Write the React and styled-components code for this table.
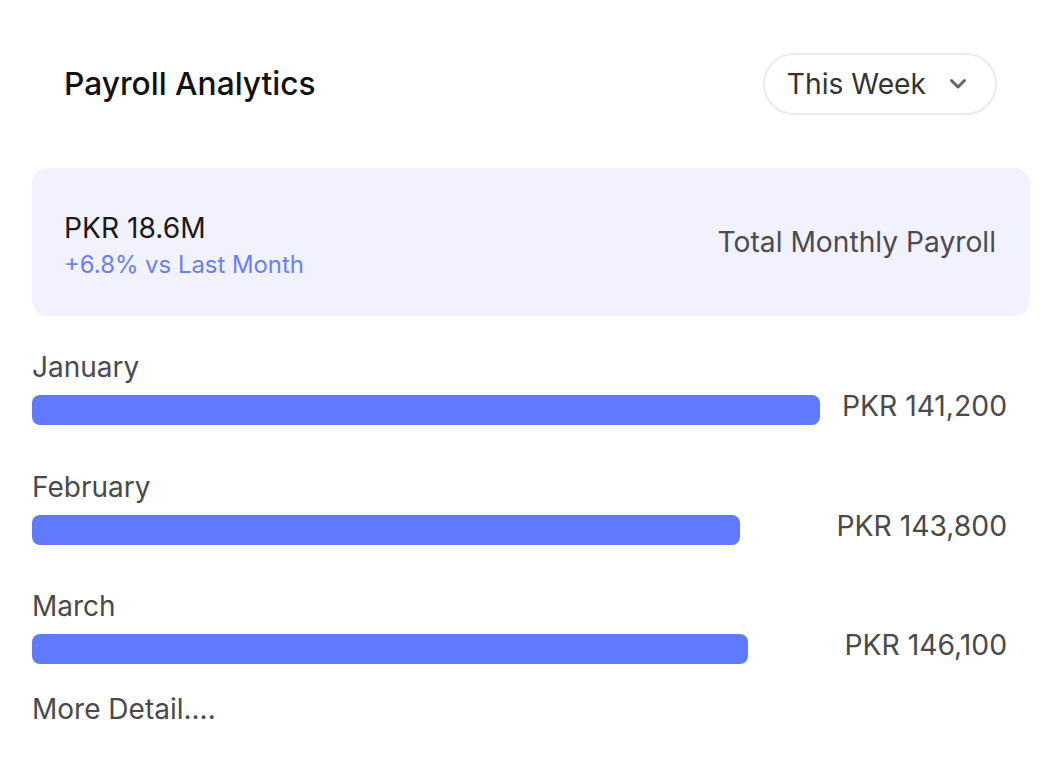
import React from "react";
import styled, { createGlobalStyle } from "styled-components";

const GlobalStyle = createGlobalStyle`
  html, body { margin: 0; padding: 0; background: #ffffff; }
  body { font-family: Inter, "Noto Sans", sans-serif; -webkit-font-smoothing: antialiased; }
`;

const Panel = styled.div`
  width: 998px;
  padding: 53px 32px 40px 32px;
  display: flex;
  flex-direction: column;
`;

const Header = styled.div`
  display: flex;
  align-items: center;
  justify-content: space-between;
  height: 62px;
  padding: 0 33px 0 32px;
`;

const Title = styled.h2`
  margin: 0;
  font-size: 31.7px;
  font-weight: 500;
  color: #111111;
  line-height: 36px;
`;

const PeriodButton = styled.button`
  display: flex;
  align-items: center;
  gap: 23px;
  height: 62px;
  box-sizing: border-box;
  padding: 0 28px 0 22px;
  border: 2px solid #ebebeb;
  border-radius: 31px;
  background: #ffffff;
  font-family: inherit;
  font-size: 28.2px;
  color: #333333;
  cursor: pointer;
`;

const SummaryCard = styled.div`
  margin-top: 53px;
  height: 148px;
  box-sizing: border-box;
  padding: 0 34px 0 32px;
  border-radius: 16px;
  background: #f2f2fe;
  display: flex;
  align-items: center;
  justify-content: space-between;
`;

const SummaryLeft = styled.div`
  display: flex;
  flex-direction: column;
  gap: 6px;
  margin-top: 6px;
`;

const Amount = styled.div`
  font-size: 28.2px;
  line-height: 34px;
  color: #1a1a1a;
`;

const Change = styled.div`
  font-size: 23.9px;
  line-height: 28px;
  color: #6a80f2;
`;

const SummaryLabel = styled.div`
  font-size: 28.2px;
  color: #4b4b50;
`;

const Rows = styled.div`
  margin-top: 36px;
  display: flex;
  flex-direction: column;
  gap: 46.5px;
`;

const Row = styled.div`
  display: grid;
  grid-template-columns: 788px 1fr;
  grid-template-rows: 30px 30px;
  row-gap: 13px;
`;

const MonthLabel = styled.div`
  grid-column: 1 / 3;
  font-size: 28px;
  line-height: 30px;
  color: #4a4a4a;
`;

const Track = styled.div`
  height: 30px;
`;

const Fill = styled.div`
  height: 100%;
  border-radius: 8px;
  background: #5f7aff;
`;

const Value = styled.div`
  font-size: 28.3px;
  line-height: 30px;
  color: #4a4a4a;
  text-align: right;
  padding-right: 23px;
  margin-top: -4px;
  white-space: nowrap;
`;

const MoreLink = styled.a`
  margin-top: 29px;
  font-size: 28px;
  line-height: 32px;
  color: #4a4a4a;
  text-decoration: none;
  cursor: pointer;
`;

const Chevron = () => (
  <svg width="18" height="12" viewBox="0 0 18 12" fill="none">
    <polyline
      points="2.5,2.5 9,9 15.5,2.5"
      stroke="#666666"
      strokeWidth="3"
      strokeLinecap="round"
      strokeLinejoin="round"
    />
  </svg>
);

const months = [
  { name: "January", value: "PKR 141,200", pct: 100 },
  { name: "February", value: "PKR 143,800", pct: 89.8 },
  { name: "March", value: "PKR 146,100", pct: 90.9 },
];

export default function App() {
  return (
    <>
      <GlobalStyle />
      <Panel>
        <Header>
          <Title>Payroll Analytics</Title>
          <PeriodButton>
            This Week
            <Chevron />
          </PeriodButton>
        </Header>
        <SummaryCard>
          <SummaryLeft>
            <Amount>PKR 18.6M</Amount>
            <Change>+6.8% vs Last Month</Change>
          </SummaryLeft>
          <SummaryLabel>Total Monthly Payroll</SummaryLabel>
        </SummaryCard>
        <Rows>
          {months.map((m) => (
            <Row key={m.name}>
              <MonthLabel>{m.name}</MonthLabel>
              <Track>
                <Fill style={{ width: `${m.pct}%` }} />
              </Track>
              <Value>{m.value}</Value>
            </Row>
          ))}
        </Rows>
        <MoreLink>More Detail....</MoreLink>
      </Panel>
    </>
  );
}
